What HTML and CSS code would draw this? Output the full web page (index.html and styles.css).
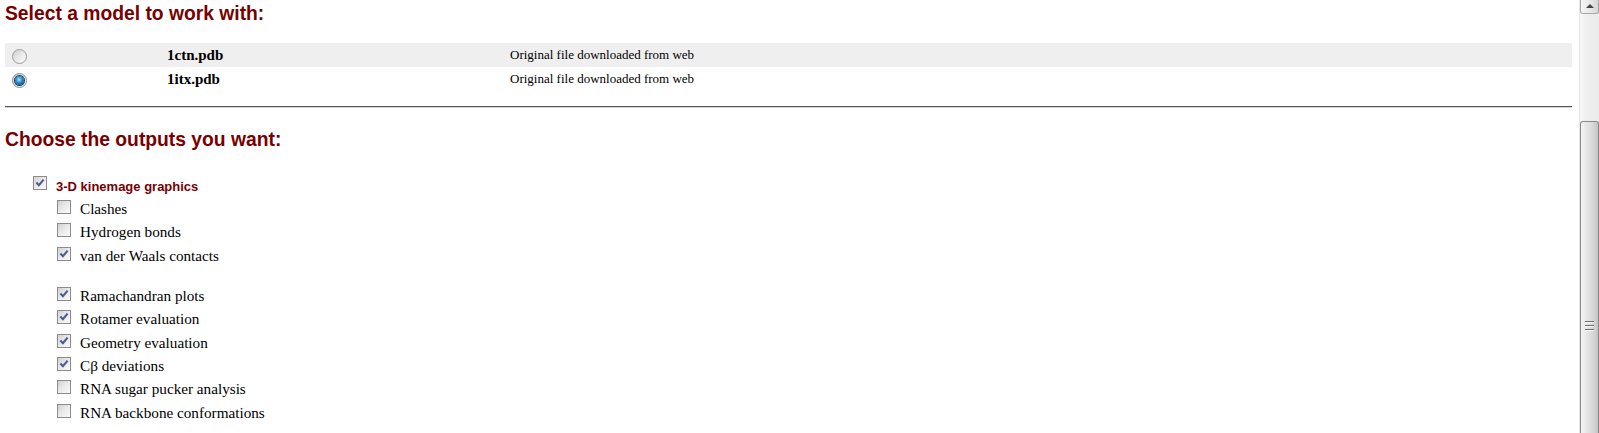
FILE: index.html
```html
<!DOCTYPE html>
<html>
<head>
<meta charset="utf-8">
<title>Model selection</title>
<link rel="stylesheet" href="styles.css">
</head>
<body>
<div class="window">
  <main class="page">
    <h2 class="section-title first">Select a model to work with:</h2>
    <div class="models">
      <div class="model-row alt">
        <span class="radio-cell"><span class="radio"></span></span>
        <b class="model-name">1ctn.pdb</b>
        <span class="model-desc">Original file downloaded from web</span>
      </div>
      <div class="model-row">
        <span class="radio-cell"><span class="radio checked"><span class="dot"></span></span></span>
        <b class="model-name">1itx.pdb</b>
        <span class="model-desc">Original file downloaded from web</span>
      </div>
    </div>
    <hr class="divider">
    <h2 class="section-title second">Choose the outputs you want:</h2>
    <div class="outputs">
      <div class="opt main">
        <span class="cb checked"><svg viewBox="0 0 14 14" width="14" height="14"><path d="M3.4 6.6 L5.9 9.2 L10.6 3.6" fill="none" stroke="#4c5d92" stroke-width="2.1"/></svg></span><span class="main-label">3-D kinemage graphics</span>
      </div>
      <div class="group">
        <div class="opt sub"><span class="cb"></span><span class="lbl">Clashes</span></div>
        <div class="opt sub"><span class="cb"></span><span class="lbl">Hydrogen bonds</span></div>
        <div class="opt sub"><span class="cb checked"><svg viewBox="0 0 14 14" width="14" height="14"><path d="M3.4 6.6 L5.9 9.2 L10.6 3.6" fill="none" stroke="#4c5d92" stroke-width="2.1"/></svg></span><span class="lbl">van der Waals contacts</span></div>
      </div>
      <div class="group gap">
        <div class="opt sub"><span class="cb checked"><svg viewBox="0 0 14 14" width="14" height="14"><path d="M3.4 6.6 L5.9 9.2 L10.6 3.6" fill="none" stroke="#4c5d92" stroke-width="2.1"/></svg></span><span class="lbl">Ramachandran plots</span></div>
        <div class="opt sub"><span class="cb checked"><svg viewBox="0 0 14 14" width="14" height="14"><path d="M3.4 6.6 L5.9 9.2 L10.6 3.6" fill="none" stroke="#4c5d92" stroke-width="2.1"/></svg></span><span class="lbl">Rotamer evaluation</span></div>
        <div class="opt sub"><span class="cb checked"><svg viewBox="0 0 14 14" width="14" height="14"><path d="M3.4 6.6 L5.9 9.2 L10.6 3.6" fill="none" stroke="#4c5d92" stroke-width="2.1"/></svg></span><span class="lbl">Geometry evaluation</span></div>
        <div class="opt sub"><span class="cb checked"><svg viewBox="0 0 14 14" width="14" height="14"><path d="M3.4 6.6 L5.9 9.2 L10.6 3.6" fill="none" stroke="#4c5d92" stroke-width="2.1"/></svg></span><span class="lbl">Cβ deviations</span></div>
        <div class="opt sub"><span class="cb"></span><span class="lbl">RNA sugar pucker analysis</span></div>
        <div class="opt sub"><span class="cb"></span><span class="lbl">RNA backbone conformations</span></div>
      </div>
    </div>
  </main>
  <div class="scrollbar">
    <div class="sb-up"><span class="sb-arrow"></span></div>
    <div class="sb-track"></div>
    <div class="sb-thumb">
      <div class="sb-grip"><i></i><i></i><i></i></div>
    </div>
  </div>
</div>
</body>
</html>
```
FILE: styles.css
```css
html, body {
  margin: 0;
  padding: 0;
  background: #fff;
}
body {
  font-family: "Liberation Serif", "Times New Roman", serif;
  color: #000;
  overflow: hidden;
}
.window {
  display: flex;
  height: 433px;
  overflow: hidden;
}
.page {
  flex: 1;
  min-width: 0;
  padding: 3px 7px 0 5px;
}
.section-title {
  margin: 0;
  font-family: "Liberation Sans", Arial, sans-serif;
  font-weight: bold;
  font-size: 19.3px;
  line-height: 22px;
  color: #780000;
}
.models {
  margin-top: 18px;
}
.model-row {
  display: grid;
  grid-template-columns: 162px 343px 1fr;
  align-items: center;
  height: 24px;
  line-height: 24px;
}
.model-row.alt {
  background: #efefef;
}
.radio-cell {
  display: flex;
  align-items: center;
  padding-left: 7px;
  padding-top: 3px;
}
.radio {
  box-sizing: border-box;
  width: 15px;
  height: 15px;
  border-radius: 50%;
  border: 1px solid #9c9c9c;
  background: linear-gradient(135deg, #cdcdcd 0%, #e6e6e6 45%, #ffffff 100%);
  display: flex;
  align-items: center;
  justify-content: center;
}
.radio.checked {
  border-color: #8a8a8a;
  background: linear-gradient(135deg, #d4d4d4 0%, #f2f2f2 60%, #ffffff 100%);
}
.radio .dot {
  width: 9px;
  height: 9px;
  border-radius: 50%;
  background: radial-gradient(circle at 45% 40%, #c4e8ff 0%, #45a6e6 30%, #0b64aa 65%, #0a2f55 100%);
  box-shadow: 0 0 0 1px #1d3550;
}
.model-name {
  font-size: 15px;
}
.model-desc {
  font-size: 13px;
}
.divider {
  margin: 15px 0 0 0;
  height: 0;
  border: 0;
  border-top: 1px solid #555;
  border-bottom: 1px solid #d6d6d6;
}
.section-title.second {
  margin-top: 21px;
}
.outputs {
  margin-top: 25px;
}
.opt {
  display: block;
  white-space: nowrap;
}
.opt.main {
  padding-left: 28px;
  font-family: "Liberation Sans", Arial, sans-serif;
  font-size: 13px;
  font-weight: bold;
  line-height: 21px;
  color: #780000;
}
.opt.sub {
  padding-left: 52px;
  font-size: 15.2px;
  line-height: 23.33px;
}
.group.gap {
  margin-top: 17px;
}
.cb {
  display: inline-block;
  box-sizing: border-box;
  width: 14px;
  height: 14px;
  border: 1px solid #8c8c8c;
  background: linear-gradient(135deg, #d0d0d0 0%, #e8e8e8 45%, #fbfbfb 100%);
  vertical-align: 0;
}
.cb svg {
  display: block;
  margin: -1px;
}
.opt.main .cb {
  margin-right: 9px;
  vertical-align: 1px;
}
.opt.sub .cb {
  margin-right: 9px;
}

/* fake classic scrollbar */
.scrollbar {
  flex: 0 0 20px;
  display: flex;
  flex-direction: column;
  background: #f0f0f0;
  border-left: 1px solid #e6e6e6;
  box-sizing: border-box;
}
.sb-up {
  height: 14px;
  box-sizing: border-box;
  border: 1px solid #a9a9a9;
  border-top: 0;
  border-radius: 0 0 3px 3px;
  background: linear-gradient(90deg, #f6f6f6, #e6e6e6 60%, #d6d6d6);
  display: flex;
  align-items: center;
  justify-content: center;
}
.sb-arrow {
  width: 0;
  height: 0;
  border-left: 4px solid transparent;
  border-right: 4px solid transparent;
  border-bottom: 4px solid #444;
  margin-top: -1px;
}
.sb-track {
  height: 107px;
  background: linear-gradient(90deg, #f7f7f7, #eeeeee 40%, #ebebeb);
}
.sb-thumb {
  flex: 1;
  box-sizing: border-box;
  border: 1px solid #8a8a8a;
  border-bottom: 0;
  border-radius: 3px 3px 0 0;
  background: linear-gradient(90deg, #f6f6f6 0%, #ececec 20%, #dedede 55%, #cfcfcf 85%, #c2c2c2 100%);
  padding-top: 199px;
}
.sb-grip {
  display: flex;
  flex-direction: column;
  align-items: center;
  gap: 2px;
}
.sb-grip i {
  display: block;
  width: 9px;
  height: 1px;
  background: #6d6d6d;
  border-bottom: 1px solid #fafafa;
}
```
